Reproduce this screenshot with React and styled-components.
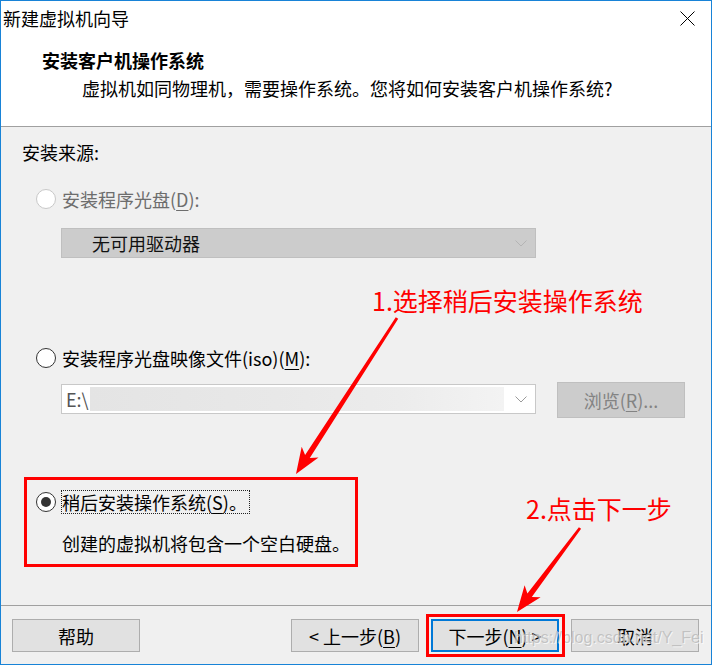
import React from "react";
import styled, { createGlobalStyle } from "styled-components";

const FONT = `"Noto Sans CJK SC", "Noto Sans", sans-serif`;

const Global = createGlobalStyle`
  html, body { margin: 0; padding: 0; background: #fff; }
  body { font-family: ${FONT}; }
  * { box-sizing: border-box; }
`;

const Window = styled.div`
  position: relative;
  width: 712px;
  height: 665px;
  border: 1px solid #1883d7;
  background: #f0f0f0;
  display: flex;
  flex-direction: column;
  font-family: ${FONT};
  font-size: 18px;
  color: #000;
  overflow: hidden;
`;

const Header = styled.header`
  flex: none;
  height: 126px;
  background: #fff;
  border-bottom: 1px solid #a0a0a0;
  display: flex;
  flex-direction: column;
`;

const TitleBar = styled.div`
  height: 34px;
  display: flex;
  align-items: center;
  justify-content: space-between;
  padding: 0 16px 0 2px;
  line-height: 24px;
`;

const Heading = styled.div`
  margin-top: 12px;
  padding-left: 41px;
  line-height: 26px;
  font-weight: bold;
`;

const SubHeading = styled.div`
  margin-top: 2px;
  padding-left: 81px;
  line-height: 26px;
`;

const Content = styled.main`
  flex: 1;
  display: flex;
  flex-direction: column;
  align-items: flex-start;
  padding: 13px 0 0 21px;
`;

const SourceLabel = styled.div`
  line-height: 24px;
`;

const OptionRow = styled.div`
  display: flex;
  align-items: center;
  gap: 5px;
  height: 24px;
  margin-left: 14px;
  margin-top: ${(p) => p.$mt}px;
`;

const Radio = styled.span`
  width: 20px;
  height: 20px;
  flex: none;
  border-radius: 50%;
  background: #fff;
  border: 1px solid ${(p) => (p.$disabled ? "#c8c8c8" : "#333")};
  display: flex;
  align-items: center;
  justify-content: center;
  &::after {
    content: "";
    width: 10px;
    height: 10px;
    border-radius: 50%;
    background: ${(p) => (p.$checked ? "#333" : "transparent")};
  }
`;

const OptionLabel = styled.span`
  line-height: 22px;
  padding-right: 2px;
  border: 1px dotted ${(p) => (p.$focused ? "#222" : "transparent")};
  color: ${(p) => (p.$disabled ? "#6d6d6d" : "#000")};
  white-space: nowrap;
`;

const U = styled.span`
  text-decoration: underline;
  text-underline-offset: 3px;
  text-decoration-thickness: 1px;
`;

const Select = styled.div`
  margin-left: 39px;
  margin-top: 17px;
  width: 475px;
  height: 30px;
  display: flex;
  align-items: center;
  justify-content: space-between;
  padding: 0 8px 0 30px;
  background: #cccccc;
  border: 1px solid #bfbfbf;
  line-height: 24px;
  color: #111;
`;

const ComboRow = styled.div`
  margin-left: 39px;
  margin-top: 12px;
  display: flex;
  align-items: flex-start;
  gap: 21px;
`;

const Combo = styled.div`
  margin-top: 2px;
  width: 475px;
  height: 30px;
  display: flex;
  align-items: center;
  padding: 2px 8px 2px 4px;
  background: #fff;
  border: 1px solid #c8c8c8;
`;

const ComboText = styled.span`
  color: #555;
  line-height: 24px;
`;

const Blurred = styled.span`
  flex: 1;
  height: 24px;
  margin: 0 11px 0 1px;
  background: linear-gradient(
    to right,
    #e4e4e4 0%,
    #e8e8e8 45%,
    #ececec 75%,
    #f3f3f3 100%
  );
`;

const BrowseButton = styled.div`
  width: 128px;
  height: 36px;
  display: flex;
  align-items: center;
  justify-content: center;
  background: #cccccc;
  border: 1px solid #bfbfbf;
  color: #838383;
`;

const Description = styled.div`
  margin-left: 40px;
  margin-top: 17px;
  line-height: 24px;
`;

const Footer = styled.footer`
  flex: none;
  height: 59px;
  border-top: 1px solid #a0a0a0;
  display: flex;
  align-items: flex-start;
  justify-content: space-between;
  padding: 13px 12px 0 11px;
`;

const ButtonGroup = styled.div`
  display: flex;
  gap: 12px;
`;

const Button = styled.div`
  width: 128px;
  height: 33px;
  display: flex;
  align-items: center;
  justify-content: center;
  background: #e1e1e1;
  border: ${(p) => (p.$primary ? "2px solid #0078d7" : "1px solid #adadad")};
  line-height: 24px;
  white-space: nowrap;
`;

const Overlay = styled.svg`
  position: absolute;
  left: -1px;
  top: -1px;
  width: 712px;
  height: 665px;
  pointer-events: none;
`;

const Note = styled.div`
  position: absolute;
  left: ${(p) => p.$x - 1}px;
  top: ${(p) => p.$y - 1}px;
  font-size: 25px;
  line-height: 30px;
  color: #ff0000;
  white-space: nowrap;
`;

const RedBox = styled.div`
  position: absolute;
  left: ${(p) => p.$x - 1}px;
  top: ${(p) => p.$y - 1}px;
  width: ${(p) => p.$w}px;
  height: ${(p) => p.$h}px;
  border: 3px solid #f00;
`;

const Watermark = styled.div`
  position: absolute;
  left: 513px;
  top: 626px;
  font-family: "Liberation Sans", Arial, sans-serif;
  font-size: 16px;
  line-height: 22px;
  color: rgba(185, 185, 185, 0.8);
  text-shadow: 1px 1px 0 rgba(255, 255, 255, 0.7);
  white-space: nowrap;
`;

const Chevron = ({ color = "#a8a8a8" }) => (
  <svg width="12" height="7" viewBox="0 0 12 7">
    <path d="M0.5 0.5 L6 6 L11.5 0.5" fill="none" stroke={color} strokeWidth="1" />
  </svg>
);

const CloseIcon = () => (
  <svg width="15" height="15" viewBox="0 0 15 15">
    <path d="M0.5 0.5 L14.5 14.5 M14.5 0.5 L0.5 14.5" stroke="#000" strokeWidth="1" />
  </svg>
);

function arrowPoints(sx, sy, tx, ty) {
  const dx = tx - sx;
  const dy = ty - sy;
  const L = Math.hypot(dx, dy);
  const ux = dx / L;
  const uy = dy / L;
  const nx = -uy;
  const ny = ux;
  const headLen = 26;
  const headHalf = 10;
  const notch = 5;
  const p = (bx, by, a, b) => `${(bx + ux * a + nx * b).toFixed(1)},${(by + uy * a + ny * b).toFixed(1)}`;
  return [
    p(sx, sy, 0, 1.4),
    p(tx, ty, -(headLen - notch), 2.8),
    p(tx, ty, -headLen, headHalf),
    p(tx, ty, 0, 0),
    p(tx, ty, -headLen, -headHalf),
    p(tx, ty, -(headLen - notch), -2.8),
    p(sx, sy, 0, -1.4),
  ].join(" ");
}

export default function App() {
  return (
    <>
      <Global />
      <Window>
        <Header>
          <TitleBar>
            <span>新建虚拟机向导</span>
            <CloseIcon />
          </TitleBar>
          <Heading>安装客户机操作系统</Heading>
          <SubHeading>虚拟机如同物理机，需要操作系统。您将如何安装客户机操作系统?</SubHeading>
        </Header>

        <Content>
          <SourceLabel>安装来源:</SourceLabel>

          <OptionRow $mt={23}>
            <Radio $disabled />
            <OptionLabel $disabled>
              安装程序光盘(<U>D</U>):
            </OptionLabel>
          </OptionRow>
          <Select>
            <span>无可用驱动器</span>
            <Chevron color="#b4b4b4" />
          </Select>

          <OptionRow $mt={88}>
            <Radio />
            <OptionLabel>
              安装程序光盘映像文件(iso)(<U>M</U>):
            </OptionLabel>
          </OptionRow>
          <ComboRow>
            <Combo>
              <ComboText>E:\</ComboText>
              <Blurred />
              <Chevron color="#9a9a9a" />
            </Combo>
            <BrowseButton>
              <span>
                浏览(<U>R</U>)...
              </span>
            </BrowseButton>
          </ComboRow>

          <OptionRow $mt={72}>
            <Radio $checked />
            <OptionLabel $focused>
              稍后安装操作系统(<U>S</U>)。
            </OptionLabel>
          </OptionRow>
          <Description>创建的虚拟机将包含一个空白硬盘。</Description>
        </Content>

        <Footer>
          <Button>帮助</Button>
          <ButtonGroup>
            <Button>
              <span>
                &lt; 上一步(<U>B</U>)
              </span>
            </Button>
            <Button $primary>
              <span>
                下一步(<U>N</U>) &gt;
              </span>
            </Button>
            <Button>取消</Button>
          </ButtonGroup>
        </Footer>

        <Watermark>https://blog.csdn.net/Y_Fei</Watermark>
        <RedBox $x={24} $y={477} $w={334} $h={90} />
        <RedBox $x={426} $y={614} $w={139} $h={43} />
        <Note $x={372} $y={285}>1.选择稍后安装操作系统</Note>
        <Note $x={526} $y={493}>2.点击下一步</Note>
        <Overlay viewBox="0 0 712 665">
          <polygon points={arrowPoints(397, 318, 296, 474)} fill="#f00" />
          <polygon points={arrowPoints(580, 528, 517, 612)} fill="#f00" />
        </Overlay>
      </Window>
    </>
  );
}
